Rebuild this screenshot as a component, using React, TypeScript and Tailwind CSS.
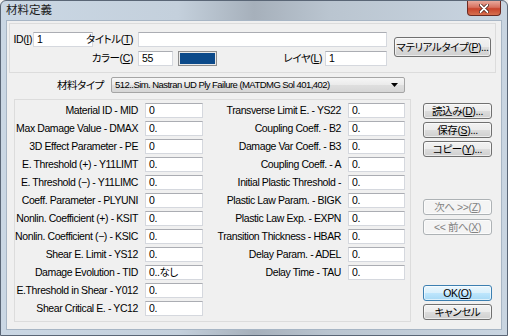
import React from "react";

// --- Dados ---
const LEFT_ROWS: [string, string][] = [
  ["Material ID - MID", "0"],
  ["Max Damage Value - DMAX", "0."],
  ["3D Effect Parameter - PE", "0"],
  ["E. Threshold (+) - Y11LIMT", "0."],
  ["E. Threshold (−) - Y11LIMC", "0."],
  ["Coeff. Parameter - PLYUNI", "0"],
  ["Nonlin. Coefficient (+) - KSIT", "0."],
  ["Nonlin. Coefficient (−) - KSIC", "0."],
  ["Shear E. Limit - YS12", "0."],
  ["Damage Evolution - TID", "0..なし"],
  ["E.Threshold in Shear - Y012", "0."],
  ["Shear Critical E. - YC12", "0."],
];

const RIGHT_ROWS: [string, string][] = [
  ["Transverse Limit E. - YS22", "0."],
  ["Coupling Coeff. - B2", "0."],
  ["Damage Var Coeff. - B3", "0."],
  ["Coupling Coeff. - A", "0."],
  ["Initial Plastic Threshold -", "0."],
  ["Plastic Law Param. - BIGK", "0."],
  ["Plastic Law Exp. - EXPN", "0."],
  ["Transition Thickness - HBAR", "0."],
  ["Delay Param. - ADEL", "0."],
  ["Delay Time - TAU", "0."],
];

function U({ children }: { children: React.ReactNode }) {
  return <span className="underline underline-offset-[1px]">{children}</span>;
}

// rótulo alinhado à direita; se não couber, transborda para a esquerda
function Label({ children, className = "" }: { children: React.ReactNode; className?: string }) {
  return (
    <div className={`flex justify-end shrink-0 whitespace-nowrap leading-none ${className}`}>
      <span>{children}</span>
    </div>
  );
}

function Field({ value = "", className = "" }: { value?: string; className?: string }) {
  return (
    <div
      className={`h-[15px] shrink-0 bg-white border border-[#d5d8de] border-t-[#abadb3] pl-[3px] flex items-center leading-none whitespace-nowrap ${className}`}
    >
      {value}
    </div>
  );
}

type BtnProps = {
  children: React.ReactNode;
  disabled?: boolean;
  focus?: boolean;
  className?: string;
};

function Btn({ children, disabled, focus, className = "" }: BtnProps) {
  let look =
    "border-[#707070] bg-[linear-gradient(#f2f2f2_0%,#ebebeb_50%,#dddddd_50%,#cfcfcf_100%)] text-black";
  if (disabled) look = "border-[#adb2b5] bg-[#f4f4f4] text-[#838383]";
  if (focus)
    look =
      "border-[#3c7fb1] bg-[linear-gradient(#eaf6fd_0%,#d9f0fc_50%,#bee6fd_50%,#a7d9f5_100%)] text-black";
  return (
    <div
      className={`flex items-center justify-center shrink-0 whitespace-nowrap rounded-[3px] border leading-none shadow-[inset_0_0_0_1px_rgba(255,255,255,0.6)] ${look} ${className}`}
    >
      {children}
    </div>
  );
}

export default function App() {
  return (
    <div className="w-[508px] h-[336px] overflow-hidden bg-[#f0f0f0] font-['Liberation_Sans','Noto_Sans_CJK_JP',sans-serif] text-[10.5px] tracking-[-0.4px] text-black [font-feature-settings:'palt']">
      <div className="w-full h-full flex flex-col rounded-t-[6px] border border-[#5a6676] bg-[linear-gradient(90deg,#cad7e4_0%,#c4d0dc_35%,#a6b0bb_50%,#bac5d0_65%,#c9d5e1_100%)]">
        {/* Title bar */}
        <div className="h-[19px] flex items-start justify-between shrink-0">
          <span className="ml-[5px] mt-[4px] text-[11.5px] tracking-normal leading-none text-[#1b1b1b]">
            材料定義
          </span>
          <div className="mr-[6px] w-[34px] h-[15px] rounded-b-[4px] border border-t-0 border-[#6b2a22] bg-[linear-gradient(#e9a99c_0%,#d7715f_45%,#c8442c_55%,#d6704f_100%)] flex items-center justify-center">
            <svg width="10" height="9" viewBox="0 0 10 9">
              <path
                d="M1.5 1 L8.5 8 M8.5 1 L1.5 8"
                stroke="#3c0f08"
                strokeWidth="3.2"
                strokeLinecap="round"
              />
              <path
                d="M1.5 1 L8.5 8 M8.5 1 L1.5 8"
                stroke="#ffffff"
                strokeWidth="1.8"
                strokeLinecap="round"
              />
            </svg>
          </div>
        </div>

        {/* Client area */}
        <div className="mx-[5px] mb-[5px] flex-1 min-h-0 bg-[#f0f0f0] border border-[#a8b6c5] flex flex-col">
          {/* Top panel */}
          <div className="ml-[2px] mt-[2px] w-[487px] h-[50px] shrink-0 border border-[#dcdcdc] flex pl-[6px] pt-[8px]">
            <div className="flex flex-col gap-[4px]">
              <div className="flex items-center">
                <Label className="w-[16px]">
                  ID(<U>I</U>)
                </Label>
                <Field value="1" className="ml-[1px] w-[60px]" />
                <Label className="w-[40px]">
                  タイトル(<U>T</U>)
                </Label>
                <Field className="ml-[5px] w-[249px]" />
              </div>
              <div className="flex items-center">
                <Label className="w-[117px]">
                  カラー(<U>C</U>)
                </Label>
                <Field value="55" className="ml-[5px] w-[35px]" />
                <div className="ml-[5px] w-[39px] h-[15px] shrink-0 border border-[#8c8c8c] bg-[#e8e8e8] p-[1px]">
                  <div className="w-full h-full bg-[#0b4989]" />
                </div>
                <Label className="w-[105px]">
                  レイヤ(<U>L</U>)
                </Label>
                <Field value="1" className="ml-[3px] w-[62px]" />
              </div>
            </div>
            <Btn className="ml-[7px] mt-[5px] w-[97px] h-[20px]">
              マテリアルタイプ(<U>P</U>)...
            </Btn>
          </div>

          {/* Material type */}
          <div className="mt-[4px] flex items-center shrink-0">
            <Label className="w-[97px]">材料タイプ</Label>
            <div className="ml-[7px] w-[294px] h-[16px] shrink-0 rounded-[2px] border border-[#a5a5a5] bg-[linear-gradient(#f6f6f6_0%,#ebebeb_50%,#dfdfdf_50%,#d6d6d6_100%)] flex items-center justify-between pl-[3px] pr-[6px] leading-none whitespace-nowrap">
              <span className="text-[9.5px] tracking-[-0.55px]">
                512..Sim. Nastran UD Ply Failure (MATDMG Sol 401,402)
              </span>
              <svg width="7" height="4" viewBox="0 0 7 4">
                <path d="M0 0 H7 L3.5 4 Z" fill="#000" />
              </svg>
            </div>
          </div>

          {/* Parameters + buttons */}
          <div className="mt-[6px] flex">
            <div className="ml-[7px] w-[397px] h-[223px] shrink-0 border border-[#dcdcdc] pt-[3px] flex">
              <div className="flex flex-col gap-[3px]">
                {LEFT_ROWS.map(([label, value], i) => (
                  <div key={i} className="flex items-center h-[15px]">
                    <Label className="w-[123px]">{label}</Label>
                    <Field value={value} className="ml-[7px] w-[58px]" />
                  </div>
                ))}
              </div>
              <div className="flex flex-col gap-[3px]">
                {RIGHT_ROWS.map(([label, value], i) => (
                  <div key={i} className="flex items-center h-[15px]">
                    <Label className="w-[138px]">{label}</Label>
                    <Field value={value} className="ml-[7px] w-[57px]" />
                  </div>
                ))}
              </div>
            </div>

            <div className="ml-[12px] w-[69px] flex flex-col">
              <Btn className="mt-[4px] h-[16px]">
                読込み(<U>D</U>)...
              </Btn>
              <Btn className="mt-[3px] h-[16px]">
                保存(<U>S</U>)...
              </Btn>
              <Btn className="mt-[3px] h-[16px]">
                コピー(<U>Y</U>)...
              </Btn>
              <Btn disabled className="mt-[42px] h-[16px]">
                次へ &gt;&gt;(<U>Z</U>)
              </Btn>
              <Btn disabled className="mt-[4px] h-[16px]">
                &lt;&lt; 前へ(<U>X</U>)
              </Btn>
              <Btn focus className="mt-[50px] h-[16px]">
                OK(<U>O</U>)
              </Btn>
              <Btn className="mt-[3px] h-[16px]">キャンセル</Btn>
            </div>
          </div>
        </div>
      </div>
    </div>
  );
}
